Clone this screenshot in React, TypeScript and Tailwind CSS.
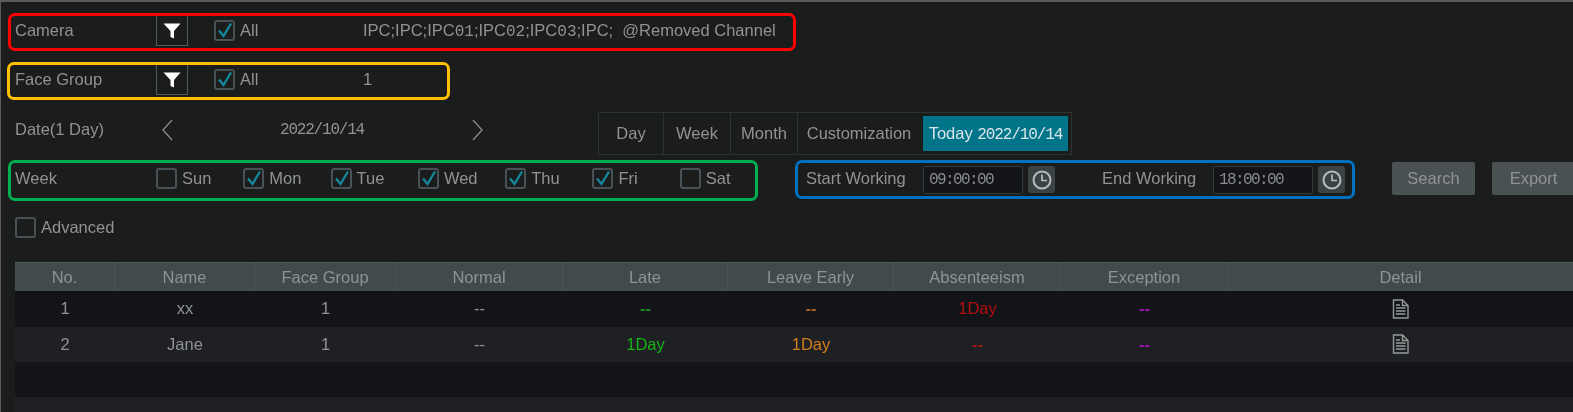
const labelCls = 'text-[16.5px] leading-none text-[#919393] blur-[0.5px]';
const mono = "font-['Liberation_Mono',monospace]";

function Digits({ children, tight = false }: { children: string; tight?: boolean }) {
  return <span className={`${mono} text-[16px] ${tight ? 'tracking-[-1.1px]' : ''}`}>{children}</span>;
}

function Check({ on = false }: { on?: boolean }) {
  return (
    <span className="relative block h-[21px] w-[21px] shrink-0 rounded-[3px] border-2 border-[#485256] blur-[0.4px]">
      {on && (
        <svg viewBox="0 0 21 21" className="absolute -left-[2px] -top-[2px] h-[21px] w-[21px]">
          <path d="M5 10.5 L9.5 16 L17 3.5" fill="none" stroke="#14879c" strokeWidth="2.4" />
        </svg>
      )}
    </span>
  );
}

function FilterBtn() {
  return (
    <span className="flex h-[30px] w-[32px] shrink-0 items-center justify-center self-start border border-t-0 border-[#55595b]">
      <svg viewBox="0 0 18 18" className="h-[18px] w-[18px] blur-[0.4px]">
        <path d="M0.5 1.5 H17.5 L11 9 V16.5 L7.5 15 V9 Z" fill="#fff" />
      </svg>
    </span>
  );
}

function AllCheck() {
  return (
    <span className="ml-[26px] flex w-[149px] items-center gap-[5px]">
      <Check on />
      <span className={labelCls}>All</span>
    </span>
  );
}

function ClockBtn() {
  return (
    <span className="ml-[5px] flex h-[27px] w-[27px] shrink-0 items-center justify-center rounded-[3px] bg-[#3a4244]">
      <svg viewBox="0 0 20 20" className="h-[20px] w-[20px] blur-[0.4px]" fill="none" stroke="#b9bcbc" strokeWidth="2">
        <circle cx="10" cy="10" r="8.5" />
        <path d="M10 4.5 V10.5 H15" strokeWidth="1.7" />
      </svg>
    </span>
  );
}

function TimeInput({ value }: { value: string }) {
  return (
    <span className="flex h-[28px] w-[100px] shrink-0 items-center rounded-[2px] border border-[#33383a] bg-[#121417] pl-[5px] text-[#8a8c8c]">
      <span className={`blur-[0.5px] ${mono} text-[16px] tracking-[-1.6px]`}>{value}</span>
    </span>
  );
}

function DocIcon() {
  return (
    <svg viewBox="0 0 17 20" className="h-[20px] w-[17px] blur-[0.4px]" fill="none" stroke="#979999" strokeWidth="1.4">
      <path d="M1.5 1 H10.5 L16 6.5 V19 H1.5 Z" />
      <path d="M10.5 1 V6.5 H16 M4 6 H8 M4 9 H13.5 M4 12 H13.5 M4 15 H13.5" />
    </svg>
  );
}

const cols = 'grid grid-cols-[100px_140px_141px_167px_165px_166px_167px_167px_345px]';
const headers = ['No.', 'Name', 'Face Group', 'Normal', 'Late', 'Leave Early', 'Absenteeism', 'Exception', 'Detail'];
const days: [string, boolean][] = [
  ['Sun', false],
  ['Mon', true],
  ['Tue', true],
  ['Wed', true],
  ['Thu', true],
  ['Fri', true],
  ['Sat', false],
];
const rows = [
  { no: '1', name: 'xx', late: '--', early: '--', absent: '1Day' },
  { no: '2', name: 'Jane', late: '1Day', early: '1Day', absent: '--' },
];

export default function App() {
  return (
    <div className="h-[412px] w-[1573px] overflow-hidden border-l border-t-2 border-[#5a5c5c] bg-[#1b1d1c] font-['Liberation_Sans',sans-serif]">
      {/* camera */}
      <div className="ml-[7px] mt-[11px] flex h-[38px] w-[788px] items-center rounded-[7px] border-[3px] border-[#fe0000] pb-[3px] pl-[4px]">
        <span className={`w-[141px] ${labelCls}`}>Camera</span>
        <FilterBtn />
        <AllCheck />
        <span className={labelCls}>
          IPC;IPC;IPC<Digits>01</Digits>;IPC<Digits>02</Digits>;IPC<Digits>03</Digits>;IPC;&nbsp; @Removed Channel
        </span>
      </div>

      {/* face group */}
      <div className="ml-[6px] mt-[11px] flex h-[38px] w-[443px] items-center rounded-[7px] border-[3px] border-[#ffc000] pb-[3px] pl-[5px]">
        <span className={`w-[141px] ${labelCls}`}>Face Group</span>
        <FilterBtn />
        <AllCheck />
        <span className={labelCls}>1</span>
      </div>

      {/* date */}
      <div className="ml-[14px] mt-[12px] flex h-[43px] items-center">
        <span className={`w-[145px] ${labelCls} pb-[8px]`}>Date(1 Day)</span>
        <svg viewBox="0 0 14 24" className="mb-[8px] h-[24px] w-[14px] blur-[0.4px]" fill="none" stroke="#858787" strokeWidth="1.4">
          <path d="M12 2 L3 12 L12 22" />
        </svg>
        <span className={`ml-[106px] w-[84px] pb-[8px] leading-none ${labelCls} ${mono} text-[16px] tracking-[-1.2px]`}>2022/10/14</span>
        <svg viewBox="0 0 14 24" className="mb-[8px] ml-[107px] h-[24px] w-[14px] blur-[0.4px]" fill="none" stroke="#858787" strokeWidth="1.4">
          <path d="M2 2 L11 12 L2 22" />
        </svg>
        <div className="ml-[113px] flex h-[43px] items-center border border-[#2f3233] text-[16.5px] text-[#919393]">
          <span className="flex h-full w-[65px] items-center justify-center border-r border-[#2f3233]"><span className="blur-[0.5px]">Day</span></span>
          <span className="flex h-full w-[67px] items-center justify-center border-r border-[#2f3233]"><span className="blur-[0.5px]">Week</span></span>
          <span className="flex h-full w-[67px] items-center justify-center border-r border-[#2f3233]"><span className="blur-[0.5px]">Month</span></span>
          <span className="flex h-full w-[122px] items-center justify-center"><span className="blur-[0.5px]">Customization</span></span>
          <span className="ml-[3px] mr-[3px] flex h-[35px] w-[145px] items-center justify-center bg-[#00758a] text-[#d8e6e8]">
            <span className="blur-[0.5px]">Today&nbsp;<Digits tight>2022/10/14</Digits></span>
          </span>
        </div>
      </div>

      {/* week + working hours */}
      <div className="ml-[7px] mt-[5px] flex items-start">
        <div className="flex h-[41px] w-[750px] shrink-0 items-center rounded-[7px] border-[3px] border-[#00b050] pb-[5px] pl-[4px]">
          <span className={`w-[141px] shrink-0 ${labelCls}`}>Week</span>
          {days.map(([d, on]) => (
            <span key={d} className="flex w-[87.3px] shrink-0 items-center gap-[5px]">
              <Check on={on} />
              <span className={labelCls}>{d}</span>
            </span>
          ))}
        </div>
        <div className="ml-[37px] flex h-[39px] w-[560px] shrink-0 items-center rounded-[7px] border-[3px] border-[#0070c0] pl-[8px]">
          <span className={`w-[117px] pb-[2px] ${labelCls}`}>Start Working</span>
          <TimeInput value="09:00:00" />
          <ClockBtn />
          <span className={`ml-[47px] w-[111px] pb-[2px] ${labelCls}`}>End Working</span>
          <TimeInput value="18:00:00" />
          <ClockBtn />
        </div>
        <span className="ml-[37px] mt-[2px] flex h-[33px] w-[83px] shrink-0 items-center justify-center rounded-[2px] bg-[#4a5153]"><span className={labelCls}>Search</span></span>
        <span className="ml-[17px] mt-[2px] flex h-[33px] w-[83px] shrink-0 items-center justify-center rounded-[2px] bg-[#4a5153]"><span className={labelCls}>Export</span></span>
      </div>

      {/* advanced */}
      <div className="ml-[14px] mt-[16px] flex items-center gap-[5px]">
        <Check />
        <span className={labelCls}>Advanced</span>
      </div>

      {/* table */}
      <div className="ml-[14px] mt-[24px] w-[1558px] text-[16.5px] text-[#919393]">
        <div className={`${cols} h-[29px] border-t border-[#4d5658] bg-[#414a4c]`}>
          {headers.map((h, i) => (
            <div key={h} className={`flex items-center justify-center ${i < 8 ? 'border-r border-[#4b5456]' : ''}`}>
              <span className="blur-[0.5px]">{h}</span>
            </div>
          ))}
        </div>
        {rows.map((r, i) => (
          <div key={r.no} className={`${cols} h-[35.5px] items-center text-center ${i % 2 ? 'bg-[#1e2023]' : 'bg-[#121417]'}`}>
            <div className="blur-[0.5px]">{r.no}</div>
            <div className="blur-[0.5px]">{r.name}</div>
            <div className="blur-[0.5px]">1</div>
            <div className="blur-[0.5px]">--</div>
            <div className={`blur-[0.5px] ${r.late === '--' ? 'font-bold text-[#1b8a1b]' : 'text-[#15b315]'}`}>{r.late}</div>
            <div className={`blur-[0.5px] ${r.early === '--' ? 'font-bold text-[#a85e1c]' : 'text-[#d47f1f]'}`}>{r.early}</div>
            <div className={`blur-[0.5px] ${r.absent === '--' ? 'font-bold text-[#9c1a1a]' : 'text-[#b51010]'}`}>{r.absent}</div>
            <div className="font-bold text-[#9a12a8] blur-[0.5px]">--</div>
            <div className="flex justify-center">
              <DocIcon />
            </div>
          </div>
        ))}
        <div className="h-[35px] bg-[#121417]" />
        <div className="h-[35px] bg-[#1e2023]" />
      </div>
    </div>
  );
}
